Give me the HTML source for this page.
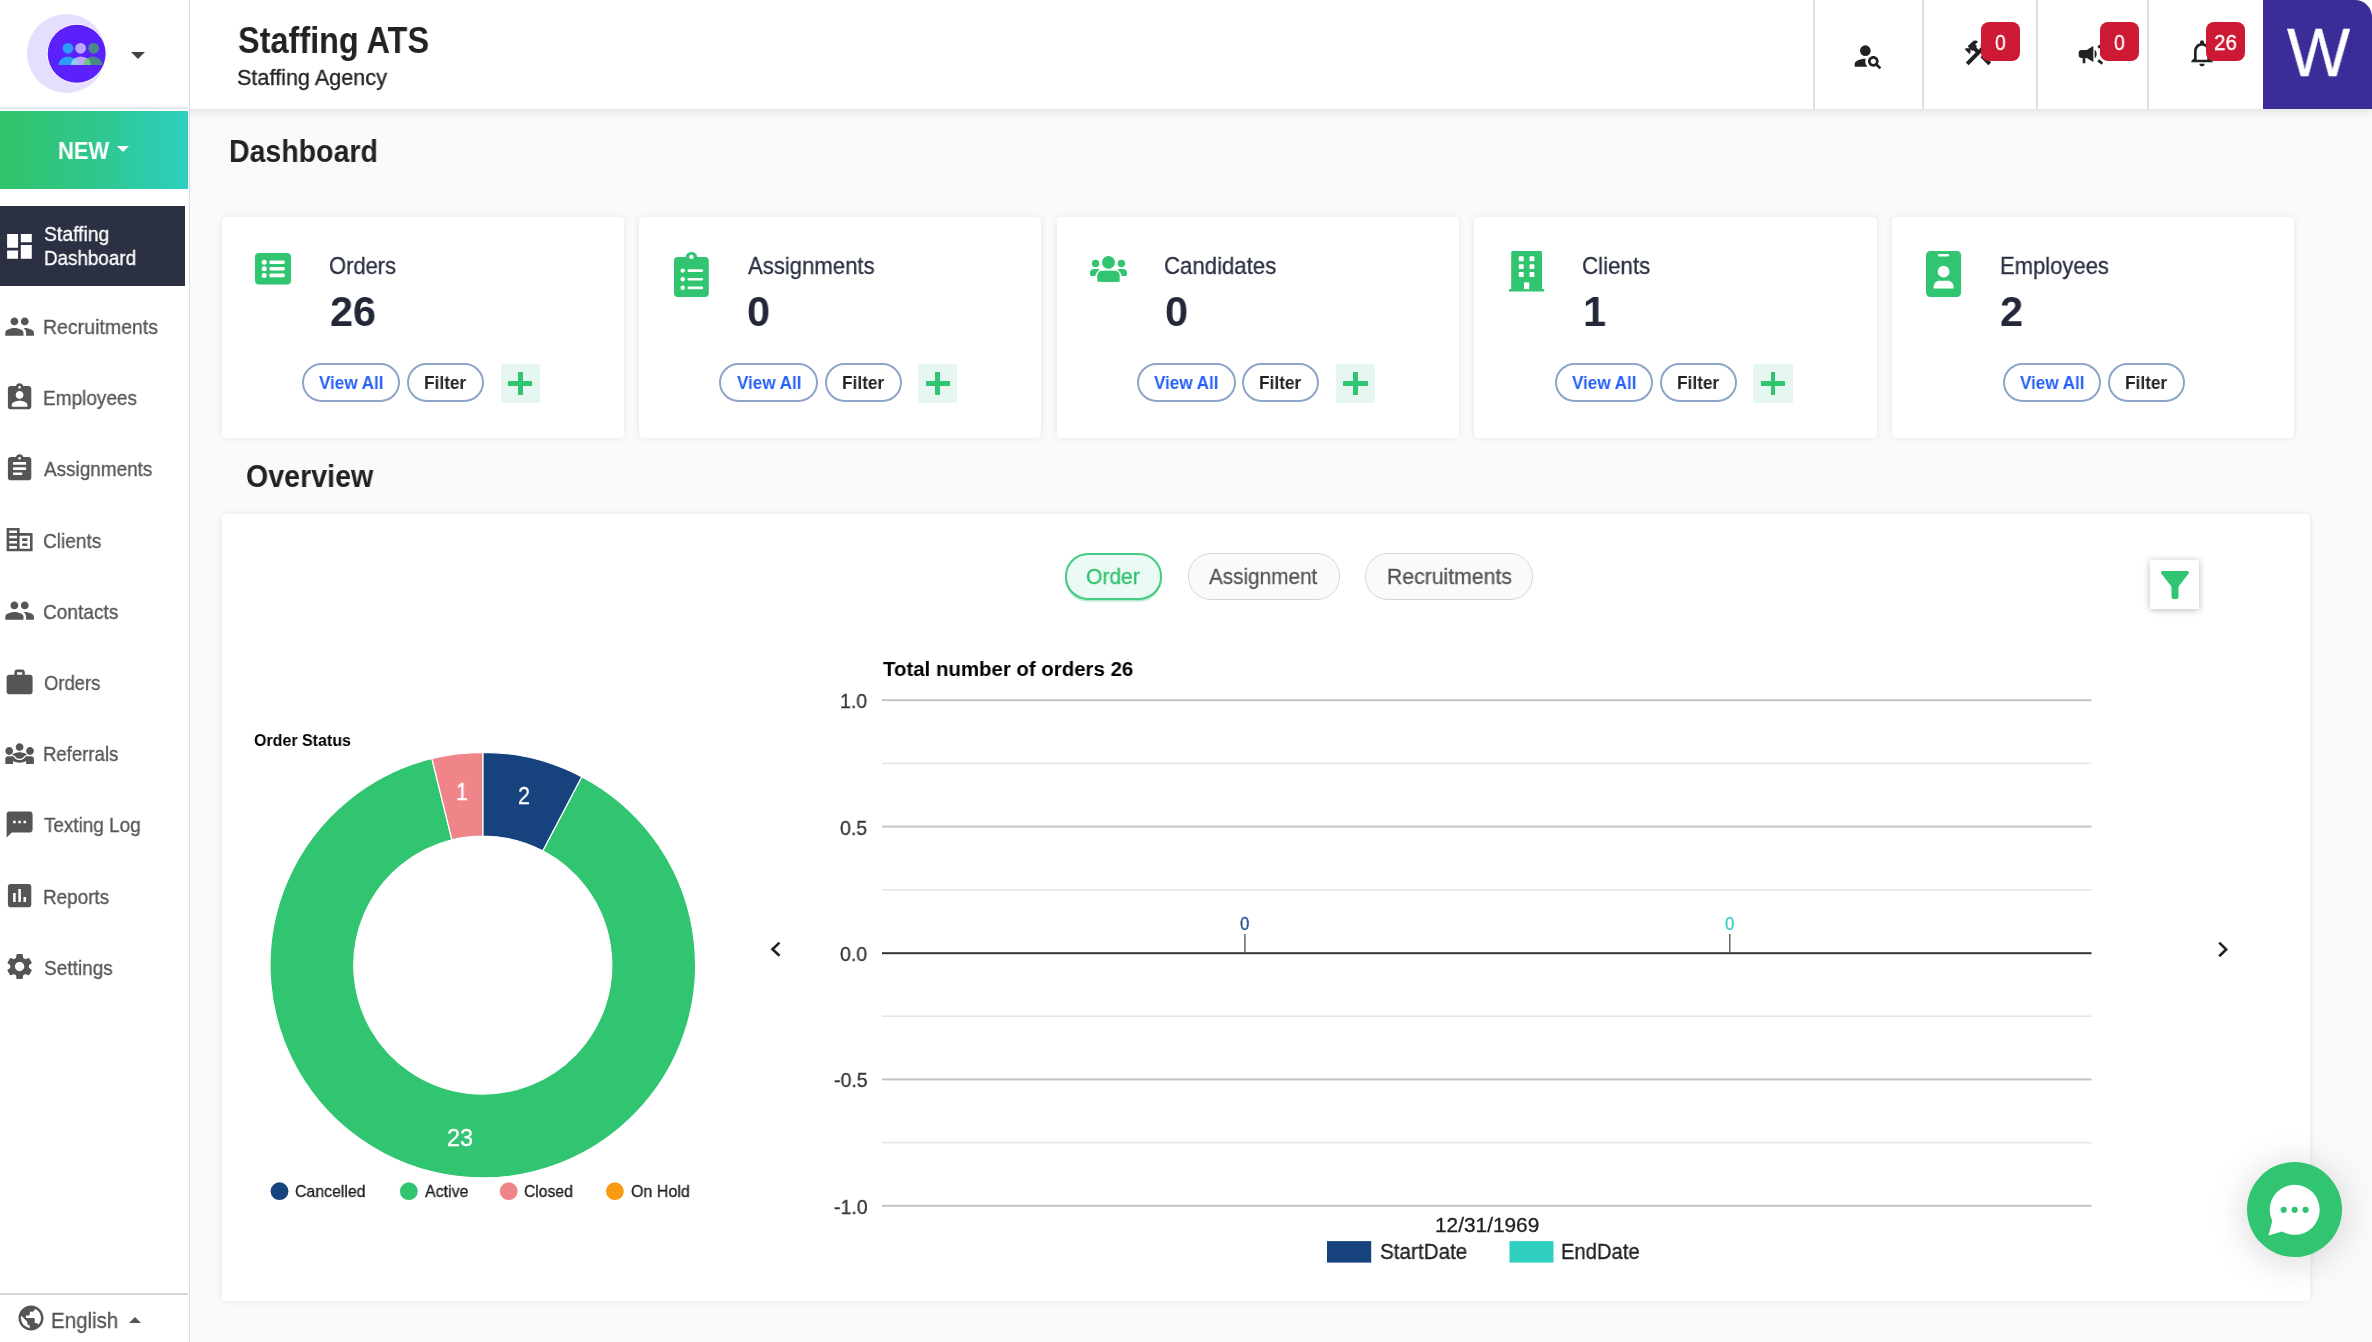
<!DOCTYPE html>
<html lang="en"><head><meta charset="utf-8"><title>Staffing ATS - Dashboard</title>
<style>
*{box-sizing:border-box;margin:0;padding:0}
html,body{width:2372px;height:1342px;overflow:hidden}
body{position:relative;background:#fafafa;font-family:"Liberation Sans",sans-serif;color:#222}
h1,h2{font-weight:normal;font-size:inherit}
.t{position:absolute;white-space:nowrap;line-height:1;transform-origin:0 0;font-weight:400;will-change:transform;-webkit-text-stroke:.3px currentColor}
.t.b{font-weight:700;-webkit-text-stroke:0}
.ic{position:absolute;display:block;overflow:visible}
header.top{position:absolute;left:0;top:0;width:2372px;height:109.200px;background:#fff;box-shadow:0 3px 10px rgba(0,0,0,.10);z-index:2}
.vd{position:absolute;top:0;width:1.400px;height:109px;background:#dedede}
.o>*{margin-left:var(--x);margin-top:var(--y)}
.o2>*{margin-left:var(--px);margin-top:var(--py)}
button{font:inherit;color:inherit;padding:0;margin:0;border:0;background:none;display:block;text-align:left;cursor:pointer}
.badge .t{-webkit-text-stroke:.35px #fff}
.badge{position:absolute;width:39.400px;height:39.600px;border-radius:8px;background:#cd1934;font-weight:normal}
.avatar{position:absolute;width:109.400px;height:109px;background:#3b2d98;border-top-right-radius:17px}
aside.side{position:absolute;left:0;top:0;width:189.500px;height:1342px;background:#fff;border-right:1.500px solid #d9dee2;z-index:3}
.logo{position:absolute;left:0;top:0;width:188px;height:109px;border-bottom:2px solid #e3e8ec}
.lav{position:absolute;left:26.800px;top:13.900px;width:79px;height:79px;border-radius:50%;background:#e6defd}
.caret{position:absolute;width:0;height:0;border-style:solid}
.newbtn{position:absolute;width:188.400px;height:78px;background:linear-gradient(90deg,#31c36a 0%,#2fc78c 50%,#2dcfc0 100%)}
.nav.act::before{content:"";position:absolute;left:0;top:205.700px;width:185.100px;height:80px;background:#2b3142}
.lang{position:absolute;width:188px;height:48px}
.lang .ln{position:absolute;left:0;top:1293.300px;width:188px;height:2px;background:#d6d6d6}
.card{position:absolute;width:402.200px;height:221.200px;background:#fff;border-radius:4.500px;box-shadow:0 0 7px rgba(0,0,0,.085)}
.pill{position:absolute;top:363.400px;height:38.400px;border:2px solid #8ea4c8;border-radius:20px;background:#fff}
.plus{position:absolute;top:363.800px;width:39.300px;height:39.200px;background:#e5f7f0}
.plus i{position:absolute;background:#31c471}
.plus i:first-child{left:7.600px;top:17.300px;width:24.200px;height:4.700px}
.plus i:last-child{left:17.400px;top:8px;width:4.700px;height:23.600px}
section.ov{position:absolute;width:2088px;height:787px;background:#fff;border-radius:4.500px;box-shadow:0 0 7px rgba(0,0,0,.085)}
.tab{position:absolute;top:553.400px;height:46.400px;border-radius:23px;border:1px solid #d6d6d6;background:#fafafa}
.tab.on{border:2px solid #45cb82;background:#ebfaf4;box-shadow:0 1.500px 1px rgba(63,201,125,.4)}
.fbtn{position:absolute;left:2150.200px;top:560.100px;width:49.300px;height:49px;background:#fff;box-shadow:0 1px 7px rgba(0,0,0,.28)}
.chat{position:absolute;left:2246.700px;top:1161.700px;width:95.200px;height:95.200px;border-radius:50%;background:#31c471;box-shadow:0 4px 38px rgba(0,0,0,.17);z-index:5}
</style></head>
<body>
<header class="top">
<div class="brand"><span class="t b" style="left:238.0px;top:21.9px;font-size:37px;color:#222;transform:scaleX(0.877)">Staffing ATS</span><span class="t" style="left:237.4px;top:67.3px;font-size:22.3px;color:#222;transform:scaleX(0.970)">Staffing Agency</span></div>
<i class="vd" style="left:1813.2px"></i>
<i class="vd" style="left:1922.2px"></i>
<i class="vd" style="left:2036.2px"></i>
<i class="vd" style="left:2147.2px"></i>
<svg class="ic" style="left:1852.0px;top:39.8px" width="32.0" height="32.0" viewBox="0 0 24 24" fill="#222"><circle cx="10" cy="8" r="4"/><path d="M10.35 14.01C7.62 13.91 2 15.27 2 18v2h9.54c-2.47-2.76-1.23-5.89-1.19-5.99zm9.08 4.01c.36-.59.57-1.28.57-2.02 0-2.21-1.79-4-4-4s-4 1.79-4 4 1.79 4 4 4c.74 0 1.43-.22 2.02-.57L20.59 22 22 20.590l-2.570-2.570zM16 18c-1.1 0-2-.9-2-2s.9-2 2-2 2 .9 2 2-.9 2-2 2z"/></svg>
<svg class="ic" style="left:1961.7px;top:37.0px" width="32.0" height="32.0" viewBox="0 0 24 24" fill="#222"><path d="M13.783 15.172l2.121-2.121 5.996 5.996-2.121 2.121zM17.500 10c1.930 0 3.500-1.570 3.500-3.500 0-.58-.16-1.120-.41-1.600l-2.700 2.700-1.490-1.490 2.700-2.700c-.48-.25-1.020-.41-1.600-.41C15.570 3 14 4.570 14 6.500c0 .41.08.8.21 1.160l-1.850 1.850-1.780-1.780.71-.71-1.410-1.410L12 3.490c-1.170-1.170-3.070-1.170-4.240 0L4.220 7.030l1.410 1.410H2.810l-.71.71 3.540 3.540.71-.71V9.150l1.410 1.410.71-.71 1.780 1.780-7.410 7.410 2.120 2.120L16.340 9.790c.36.130.75.210 1.160.210z"/></svg>
<svg class="ic" style="left:2076.0px;top:38.0px" width="32.0" height="32.0" viewBox="0 0 24 24" fill="#222"><path d="M18 11v2h4v-2h-4zm-2 6.610c.96.71 2.21 1.65 3.2 2.390.4-.53.8-1.070 1.200-1.600-.99-.74-2.240-1.680-3.200-2.400-.4.540-.8 1.080-1.200 1.610zM20.400 5.600c-.4-.53-.8-1.070-1.200-1.600-.99.74-2.240 1.680-3.200 2.400.4.53.8 1.070 1.200 1.600.96-.72 2.210-1.650 3.200-2.400zM4 9c-1.100 0-2 .9-2 2v2c0 1.100.9 2 2 2h1v4h2v-4h1l5 3V6L8 9H4zm11.500 3c0-1.330-.58-2.530-1.500-3.350v6.690c.92-.81 1.500-2.010 1.500-3.340z"/></svg>
<svg class="ic" style="left:2186.2px;top:37.3px" width="32.0" height="32.0" viewBox="0 0 24 24" fill="#222"><path d="M12 22c1.1 0 2-.9 2-2h-4c0 1.100.9 2 2 2zm6-6v-5c0-3.070-1.630-5.640-4.500-6.320V4c0-.83-.67-1.500-1.500-1.500s-1.500.67-1.500 1.500v.68C7.640 5.360 6 7.920 6 11v5l-2 2v1h16v-1l-2-2zm-2 1H8v-6c0-2.480 1.510-4.500 4-4.500s4 2.020 4 4.500v6z"/></svg>
<b class="badge o" style="left:1980.8px;top:21.6px;--x:-1980.8px;--y:-21.6px;"><span class="t" style="left:1995.3px;top:31.8px;font-size:22.4px;color:#fff;transform:scaleX(0.860)">0</span></b>
<b class="badge o" style="left:2099.9px;top:21.6px;--x:-2099.9px;--y:-21.6px;"><span class="t" style="left:2114.4px;top:31.8px;font-size:22.4px;color:#fff;transform:scaleX(0.860)">0</span></b>
<b class="badge o" style="left:2205.8px;top:21.6px;--x:-2205.8px;--y:-21.6px;"><span class="t" style="left:2213.8px;top:31.8px;font-size:22.4px;color:#fff;transform:scaleX(0.921)">26</span></b>
<div class="avatar o" style="left:2262.6px;top:0px;--x:-2262.6px;--y:0px;"><span class="t" style="left:2286.5px;top:18.0px;font-size:69px;color:#fff;transform:scaleX(0.969)">W</span></div>
</header>
<aside class="side">
<div class="logo"><i class="lav"></i><svg class="ic" style="left:47.4px;top:23.7px" width="59.4" height="59.4" viewBox="0 0 59.4 59.4"><circle cx="29.7" cy="29.7" r="29.7" fill="#fff"/><circle cx="29.7" cy="29.7" r="29" fill="#5b21fd"/><g transform="translate(-47.4,-23.7)"><circle cx="68.4" cy="48" r="5.4" fill="#2b9df4"/><circle cx="81" cy="48" r="5.4" fill="#b9a8fb"/><circle cx="94" cy="48" r="5.4" fill="#4a8a84"/><path d="M58.8 64.8a9.6 8.7 0 0 1 19.200 0z" fill="#2b9df4"/><path d="M84.200 64.800a9.200 8.700 0 0 1 18.400 0z" fill="#4a8a84"/><path d="M71.500 64.800a9.800 8.700 0 0 1 19.600 0z" fill="#b9a8fb"/><path d="M71.500 64.800a9.800 8.700 0 0 1 4.300-7.200a9.600 8.700 0 0 1 2.200 7.200z" fill="#8dd0f8"/><path d="M84.200 64.800a9.200 8.700 0 0 1 3.700-7.000a9.800 8.700 0 0 1 3.200 7.000z" fill="#6bc878"/></g></svg><i class="caret" style="left:130.600px;top:52.400px;border-width:7.600px 7.300px 0 7.300px;border-color:#444 transparent transparent transparent"></i></div>
<div class="newbtn o" style="left:0px;top:110.7px;--x:0px;--y:-110.7px;"><span class="t b" style="left:57.9px;top:138.8px;font-size:23.8px;color:#fff;transform:scaleX(0.921)">NEW</span><i class="caret" style="left:117px;top:145.7px;border-width:6.500px 6.700px 0 6.700px;border-color:#fff transparent transparent transparent"></i></div>
<nav>
<a class="nav act"><svg class="ic" style="left:2.6px;top:229.5px" width="32.9" height="32.9" viewBox="0 0 24 24" fill="#fff"><path d="M3 13h8V3H3v10zm0 8h8v-6H3v6zm10 0h8V11h-8v10zm0-18v6h8V3h-8z"/></svg><span class="t" style="left:43.8px;top:224.0px;font-size:20.8px;color:#fff;transform:scaleX(0.931)">Staffing</span><span class="t" style="left:43.6px;top:248.2px;font-size:20.8px;color:#fff;transform:scaleX(0.905)">Dashboard</span></a>
<a class="nav"><svg class="ic" style="left:3.7px;top:310.6px" width="31.2" height="31.2" viewBox="0 0 24 24" fill="#555"><path d="M16 11c1.66 0 2.99-1.34 2.99-3S17.66 5 16 5c-1.66 0-3 1.34-3 3s1.34 3 3 3zm-8 0c1.66 0 2.99-1.34 2.99-3S9.66 5 8 5C6.34 5 5 6.34 5 8s1.34 3 3 3zm0 2c-2.33 0-7 1.17-7 3.5V19h14v-2.5c0-2.33-4.67-3.5-7-3.5zm8 0c-.29 0-.62.02-.97.05 1.16.84 1.97 1.97 1.97 3.45V19h6v-2.5c0-2.33-4.67-3.5-7-3.5z"/></svg><span class="t" style="left:43.1px;top:316.9px;font-size:20.6px;color:#555;transform:scaleX(0.948)">Recruitments</span></a>
<a class="nav"><svg class="ic" style="left:3.7px;top:381.8px" width="31.2" height="31.2" viewBox="0 0 24 24" fill="#555"><path d="M19 3h-4.18C14.4 1.84 13.3 1 12 1c-1.3 0-2.4.84-2.82 2H5c-1.1 0-2 .9-2 2v14c0 1.1.9 2 2 2h14c1.1 0 2-.9 2-2V5c0-1.1-.9-2-2-2zm-7 0c.55 0 1 .45 1 1s-.45 1-1 1-1-.45-1-1 .45-1 1-1zm0 4c1.66 0 3 1.34 3 3s-1.34 3-3 3-3-1.34-3-3 1.34-3 3-3zm6 12H6v-1.4c0-2 4-3.1 6-3.1s6 1.1 6 3.1V19z"/></svg><span class="t" style="left:43.1px;top:388.1px;font-size:20.6px;color:#555;transform:scaleX(0.923)">Employees</span></a>
<a class="nav"><svg class="ic" style="left:3.7px;top:453.0px" width="31.2" height="31.2" viewBox="0 0 24 24" fill="#555"><path d="M19 3h-4.18C14.4 1.84 13.3 1 12 1c-1.3 0-2.4.84-2.82 2H5c-1.1 0-2 .9-2 2v14c0 1.1.9 2 2 2h14c1.1 0 2-.9 2-2V5c0-1.1-.9-2-2-2zm-7 0c.55 0 1 .45 1 1s-.45 1-1 1-1-.45-1-1 .45-1 1-1zm2 14H7v-2h7v2zm3-4H7v-2h10v2zm0-4H7V7h10v2z"/></svg><span class="t" style="left:44.0px;top:459.3px;font-size:20.6px;color:#555;transform:scaleX(0.919)">Assignments</span></a>
<a class="nav"><svg class="ic" style="left:3.7px;top:524.2px" width="31.2" height="31.2" viewBox="0 0 24 24" fill="#555"><path d="M12 7V3H2v18h20V7H12zm-2 12H4v-2h6v2zm0-4H4v-2h6v2zm0-4H4V9h6v2zm0-4H4V5h6v2zm10 12h-8V9h8v10zm-2-8h-4v2h4v-2zm0 4h-4v2h4v-2z"/></svg><span class="t" style="left:43.1px;top:530.5px;font-size:20.6px;color:#555;transform:scaleX(0.926)">Clients</span></a>
<a class="nav"><svg class="ic" style="left:3.7px;top:595.4px" width="31.2" height="31.2" viewBox="0 0 24 24" fill="#555"><path d="M16 11c1.66 0 2.99-1.34 2.99-3S17.66 5 16 5c-1.66 0-3 1.34-3 3s1.34 3 3 3zm-8 0c1.66 0 2.99-1.34 2.99-3S9.66 5 8 5C6.34 5 5 6.34 5 8s1.34 3 3 3zm0 2c-2.33 0-7 1.17-7 3.5V19h14v-2.5c0-2.33-4.67-3.5-7-3.5zm8 0c-.29 0-.62.02-.97.05 1.16.84 1.97 1.97 1.97 3.45V19h6v-2.5c0-2.33-4.67-3.5-7-3.5z"/></svg><span class="t" style="left:43.1px;top:601.7px;font-size:20.6px;color:#555;transform:scaleX(0.927)">Contacts</span></a>
<a class="nav"><svg class="ic" style="left:3.7px;top:666.6px" width="31.2" height="31.2" viewBox="0 0 24 24" fill="#555"><path d="M20 6h-4V4c0-1.11-.89-2-2-2h-4c-1.11 0-2 .89-2 2v2H4c-1.11 0-1.99.89-1.99 2L2 19c0 1.11.89 2 2 2h16c1.11 0 2-.89 2-2V8c0-1.11-.89-2-2-2zm-6 0h-4V4h4v2z"/></svg><span class="t" style="left:44.0px;top:672.9px;font-size:20.6px;color:#555;transform:scaleX(0.894)">Orders</span></a>
<a class="nav"><svg class="ic" style="left:3.7px;top:737.8px" width="31.2" height="31.2" viewBox="0 0 24 24" fill="#555"><path d="M6.32 13.01c.96.02 1.85.5 2.45 1.34C9.5 15.38 10.71 16 12 16c1.29 0 2.5-.62 3.23-1.66.6-.84 1.49-1.32 2.45-1.34-.72-1.22-3.6-2-5.68-2-2.07 0-4.96.78-5.68 2.01zM4 13c1.66 0 3-1.34 3-3S5.66 7 4 7s-3 1.34-3 3 1.34 3 3 3zm16 0c1.66 0 3-1.34 3-3s-1.34-3-3-3-3 1.34-3 3 1.34 3 3 3zm-8-3c1.66 0 3-1.34 3-3s-1.34-3-3-3-3 1.34-3 3 1.34 3 3 3zM21 14h-3.27c-.77 0-1.35.45-1.68.92-.04.06-1.36 2.08-4.05 2.08-1.43 0-3.03-.64-4.05-2.08-.39-.55-1-.92-1.68-.92H3c-1.1 0-2 .9-2 2v4h6v-2.26c1.29.9 2.99 1.26 5 1.26s3.71-.36 5-1.26V20h6v-4c0-1.1-.9-2-2-2z"/></svg><span class="t" style="left:43.1px;top:744.1px;font-size:20.6px;color:#555;transform:scaleX(0.901)">Referrals</span></a>
<a class="nav"><svg class="ic" style="left:3.7px;top:809.0px" width="31.2" height="31.2" viewBox="0 0 24 24" fill="#555"><path d="M20 2H4c-1.1 0-1.99.9-1.99 2L2 22l4-4h14c1.1 0 2-.9 2-2V4c0-1.1-.9-2-2-2zM9 11H7V9h2v2zm4 0h-2V9h2v2zm4 0h-2V9h2v2z"/></svg><span class="t" style="left:44.0px;top:815.3px;font-size:20.6px;color:#555;transform:scaleX(0.917)">Texting Log</span></a>
<a class="nav"><svg class="ic" style="left:3.7px;top:880.2px" width="31.2" height="31.2" viewBox="0 0 24 24" fill="#555"><path d="M19 3H5c-1.1 0-2 .9-2 2v14c0 1.1.9 2 2 2h14c1.1 0 2-.9 2-2V5c0-1.1-.9-2-2-2zM9 17H7v-7h2v7zm4 0h-2V7h2v10zm4 0h-2v-4h2v4z"/></svg><span class="t" style="left:43.1px;top:886.5px;font-size:20.6px;color:#555;transform:scaleX(0.918)">Reports</span></a>
<a class="nav"><svg class="ic" style="left:3.7px;top:951.4px" width="31.2" height="31.2" viewBox="0 0 24 24" fill="#555"><path d="M19.14 12.94c.04-.3.06-.61.06-.94 0-.32-.02-.64-.07-.94l2.03-1.58c.18-.14.23-.41.12-.61l-1.92-3.32c-.12-.22-.37-.29-.59-.22l-2.39.96c-.5-.38-1.03-.7-1.62-.94l-.36-2.54c-.04-.24-.24-.41-.48-.41h-3.84c-.24 0-.43.17-.47.41l-.36 2.54c-.59.24-1.13.57-1.62.94l-2.39-.96c-.22-.08-.47 0-.59.22L2.74 8.87c-.12.21-.08.47.12.61l2.03 1.58c-.05.3-.09.63-.09.94s.02.64.07.94l-2.03 1.58c-.18.14-.23.41-.12.61l1.92 3.32c.12.22.37.29.59.22l2.39-.96c.5.38 1.03.7 1.62.94l.36 2.54c.05.24.24.41.48.41h3.84c.24 0 .44-.17.47-.41l.36-2.54c.59-.24 1.13-.56 1.62-.94l2.39.96c.22.08.47 0 .59-.22l1.92-3.32c.12-.22.07-.47-.12-.61l-2.01-1.58zM12 15.6c-1.98 0-3.6-1.62-3.6-3.6s1.620-3.6 3.6-3.6 3.6 1.62 3.6 3.6-1.62 3.6-3.6 3.6z"/></svg><span class="t" style="left:44.0px;top:957.7px;font-size:20.6px;color:#555;transform:scaleX(0.924)">Settings</span></a>
</nav>
<div class="lang o" style="left:0px;top:1294.3px;--x:0px;--y:-1294.3px;"><i class="ln"></i><svg class="ic" style="left:15.6px;top:1303.4px" width="30.0" height="30.0" viewBox="0 0 24 24" fill="#555"><path d="M12 2C6.48 2 2 6.48 2 12s4.48 10 10 10 10-4.480 10-10S17.52 2 12 2zm-1 17.930c-3.95-.49-7-3.85-7-7.93 0-.62.08-1.21.21-1.79L9 15v1c0 1.1.9 2 2 2v1.930zm6.9-2.540c-.26-.81-1-1.39-1.9-1.390h-1v-3c0-.55-.45-1-1-1H8v-2h2c.55 0 1-.45 1-1V7h2c1.1 0 2-.9 2-2v-.41c2.93 1.190 5 4.060 5 7.410 0 2.080-.8 3.970-2.100 5.390z"/></svg><span class="t" style="left:50.5px;top:1309.5px;font-size:21.6px;color:#555;transform:scaleX(0.949)">English</span><i class="caret" style="left:128.500px;top:1316.500px;border-width:0 6.200px 6.300px 6.200px;border-color:transparent transparent #555 transparent"></i></div>
</aside>
<main>
<h1><span class="t b" style="left:229.1px;top:136.9px;font-size:30.8px;color:#222;transform:scaleX(0.926)">Dashboard</span></h1>
<section class="card o" style="left:221.5px;top:216.7px;--x:-221.5px;--y:-216.7px;">
<svg class="ic" style="left:255.4px;top:253.2px" width="36" height="31.400" viewBox="0 0 36 31.400"><rect width="36" height="31.400" rx="4" fill="#31c471"/><g fill="#fff"><circle cx="9.200" cy="9.200" r="2.500"/><circle cx="9.200" cy="15.800" r="2.500"/><circle cx="9.200" cy="22.400" r="2.500"/><rect x="14.500" y="7.400" width="15.200" height="3.600" rx="1"/><rect x="14.500" y="14" width="15.200" height="3.600" rx="1"/><rect x="14.500" y="20.600" width="15.200" height="3.600" rx="1"/></g></svg>
<span class="t" style="left:328.9px;top:254.1px;font-size:24px;color:#2a3042;transform:scaleX(0.914)">Orders</span>
<span class="t b" style="left:329.6px;top:290.1px;font-size:42.8px;color:#232839;transform:scaleX(0.967)">26</span>
<button class="pill o2" style="left:301.7px;width:98.5px;--px:-303.7px;--py:-365.4px"><span class="t b" style="left:319.1px;top:373.4px;font-size:19px;color:#2962f6;transform:scaleX(0.898)">View All</span></button>
<button class="pill o2" style="left:407px;width:77.2px;--px:-409px;--py:-365.4px"><span class="t b" style="left:424.1px;top:373.4px;font-size:19px;color:#222;transform:scaleX(0.908)">Filter</span></button>
<button class="plus" style="left:500.5px"><i></i><i></i></button>
</section>
<section class="card o" style="left:639.1px;top:216.7px;--x:-639.1px;--y:-216.7px;">
<svg class="ic" style="left:674.3px;top:250.900px" width="34.800" height="46.300" viewBox="0 0 34.800 45.700"><path d="M4 5.700h7.600a5.900 6.200 0 0 1 11.600 0h7.600a4 4 0 0 1 4 4v32a4 4 0 0 1-4 4H4a4 4 0 0 1-4-4v-32a4 4 0 0 1 4-4z" fill="#31c471"/><g fill="#fff"><circle cx="17.400" cy="5.600" r="2.200"/><circle cx="8.700" cy="19.300" r="2.200"/><circle cx="8.700" cy="27.900" r="2.200"/><circle cx="8.700" cy="36.500" r="2.200"/><rect x="13.500" y="18" width="15.600" height="2.700" rx="1.300"/><rect x="13.500" y="26.600" width="15.600" height="2.700" rx="1.300"/><rect x="13.500" y="35.200" width="15.600" height="2.700" rx="1.300"/></g></svg>
<span class="t" style="left:747.5px;top:254.1px;font-size:24px;color:#2a3042;transform:scaleX(0.921)">Assignments</span>
<span class="t b" style="left:747.3px;top:290.1px;font-size:42.8px;color:#232839;transform:scaleX(0.970)">0</span>
<button class="pill o2" style="left:719.3px;width:98.5px;--px:-721.3px;--py:-365.4px"><span class="t b" style="left:736.8px;top:373.4px;font-size:19px;color:#2962f6;transform:scaleX(0.898)">View All</span></button>
<button class="pill o2" style="left:824.6px;width:77.2px;--px:-826.6px;--py:-365.4px"><span class="t b" style="left:841.7px;top:373.4px;font-size:19px;color:#222;transform:scaleX(0.908)">Filter</span></button>
<button class="plus" style="left:918.1px"><i></i><i></i></button>
</section>
<section class="card o" style="left:1056.8px;top:216.7px;--x:-1056.8px;--y:-216.7px;">
<svg class="ic" style="left:1090px;top:256.200px" width="37" height="25.800" viewBox="0 0 37 25.800" fill="#31c471"><circle cx="18.500" cy="6.400" r="6.400"/><circle cx="5.600" cy="7.500" r="3.700"/><circle cx="31.400" cy="7.500" r="3.700"/><path d="M7.400 25.800v-3.300c0-4.600 3.500-7.700 7.700-7.700h6.800c4.200 0 7.700 3.100 7.700 7.700v3.300c0 0-2 0-2.800 0H10.200c-.8 0-2.800 0-2.800 0z" /><rect x="7.400" y="14.800" width="22.200" height="11" rx="4.500"/><path d="M0 16.700c0-2.300 1.700-3.800 3.700-3.800h3.700c.9 0 1.700.3 2.300.8c-2.400 1.300-4.100 3.600-4.500 6.400H1.800c-1 0-1.800-.8-1.800-1.800z"/><path d="M37 16.700c0-2.300-1.700-3.800-3.700-3.800h-3.700c-.9 0-1.700.3-2.300.8c2.400 1.300 4.100 3.600 4.500 6.400h3.400c1 0 1.800-.8 1.800-1.800z"/></svg>
<span class="t" style="left:1164.2px;top:254.1px;font-size:24px;color:#2a3042;transform:scaleX(0.924)">Candidates</span>
<span class="t b" style="left:1164.9px;top:290.1px;font-size:42.8px;color:#232839;transform:scaleX(0.970)">0</span>
<button class="pill o2" style="left:1137px;width:98.5px;--px:-1139px;--py:-365.4px"><span class="t b" style="left:1154.4px;top:373.4px;font-size:19px;color:#2962f6;transform:scaleX(0.898)">View All</span></button>
<button class="pill o2" style="left:1242.3px;width:77.2px;--px:-1244.3px;--py:-365.4px"><span class="t b" style="left:1259.4px;top:373.4px;font-size:19px;color:#222;transform:scaleX(0.908)">Filter</span></button>
<button class="plus" style="left:1335.8px"><i></i><i></i></button>
</section>
<section class="card o" style="left:1474.4px;top:216.7px;--x:-1474.4px;--y:-216.7px;">
<svg class="ic" style="left:1508.800px;top:250.800px" width="35.200" height="40.600" viewBox="0 0 35.200 40.600"><path d="M3.600 0h28a1.400 1.400 0 0 1 1.400 1.400V38h2.200v2.600H0V38h2.200V1.400A1.400 1.400 0 0 1 3.600 0z" fill="#31c471"/><g fill="#fff"><rect x="9.800" y="5.300" width="4.900" height="4.900" rx=".8"/><rect x="20.500" y="5.300" width="4.900" height="4.900" rx=".8"/><rect x="9.800" y="13.200" width="4.900" height="4.900" rx=".8"/><rect x="20.500" y="13.200" width="4.900" height="4.900" rx=".8"/><rect x="9.800" y="21.100" width="4.900" height="4.900" rx=".8"/><rect x="20.500" y="21.100" width="4.900" height="4.900" rx=".8"/><rect x="15" y="31.200" width="5.200" height="7" rx=".8"/></g></svg>
<span class="t" style="left:1581.8px;top:254.1px;font-size:24px;color:#2a3042;transform:scaleX(0.931)">Clients</span>
<span class="t b" style="left:1583.1px;top:290.1px;font-size:42.8px;color:#232839;transform:scaleX(0.970)">1</span>
<button class="pill o2" style="left:1554.6px;width:98.5px;--px:-1556.6px;--py:-365.4px"><span class="t b" style="left:1572.0px;top:373.4px;font-size:19px;color:#2962f6;transform:scaleX(0.898)">View All</span></button>
<button class="pill o2" style="left:1659.9px;width:77.2px;--px:-1661.9px;--py:-365.4px"><span class="t b" style="left:1677.0px;top:373.4px;font-size:19px;color:#222;transform:scaleX(0.908)">Filter</span></button>
<button class="plus" style="left:1753.4px"><i></i><i></i></button>
</section>
<section class="card o" style="left:1892.1px;top:216.7px;--x:-1892.1px;--y:-216.7px;">
<svg class="ic" style="left:1926.300px;top:251.200px" width="35.100" height="45.900" viewBox="0 0 35.100 45.900"><rect width="35.100" height="45.900" rx="4.300" fill="#31c471"/><g fill="#fff"><rect x="12" y="3" width="11.100" height="2.600" rx="1.300"/><circle cx="17.600" cy="20.700" r="5.900"/><path d="M7.600 37.500v-1.700c0-3.400 2.700-6 6-6h8c3.300 0 6 2.600 6 6v1.700z"/></g></svg>
<span class="t" style="left:1999.5px;top:254.1px;font-size:24px;color:#2a3042;transform:scaleX(0.917)">Employees</span>
<span class="t b" style="left:2000.2px;top:290.1px;font-size:42.8px;color:#232839;transform:scaleX(0.970)">2</span>
<button class="pill o2" style="left:2002.7px;width:98.5px;--px:-2004.7px;--py:-365.4px"><span class="t b" style="left:2020.1px;top:373.4px;font-size:19px;color:#2962f6;transform:scaleX(0.898)">View All</span></button>
<button class="pill o2" style="left:2108px;width:77.2px;--px:-2110px;--py:-365.4px"><span class="t b" style="left:2125.1px;top:373.4px;font-size:19px;color:#222;transform:scaleX(0.908)">Filter</span></button>
</section>
<h2><span class="t b" style="left:245.5px;top:461.9px;font-size:30.8px;color:#222;transform:scaleX(0.929)">Overview</span></h2>
<section class="ov o" style="left:222px;top:514.2px;--x:-222px;--y:-514.2px;">
<button class="tab on o2" style="left:1064.8px;width:97.6px;--px:-1066.8px;--py:-555.4px"><span class="t" style="left:1086.4px;top:567.0px;font-size:21.5px;color:#2fc36d;transform:scaleX(0.978)">Order</span></button>
<button class="tab o2" style="left:1188px;width:151.8px;--px:-1189px;--py:-554.4px"><span class="t" style="left:1209.3px;top:567.0px;font-size:21.5px;color:#555;transform:scaleX(0.964)">Assignment</span></button>
<button class="tab o2" style="left:1365px;width:167.5px;--px:-1366px;--py:-554.4px"><span class="t" style="left:1386.8px;top:567.0px;font-size:21.5px;color:#555;transform:scaleX(0.986)">Recruitments</span></button>
<button class="fbtn"></button><svg class="ic" style="left:2153.8px;top:563.5px" width="42.0" height="42.0" viewBox="0 0 24 24" fill="#31c471"><path d="M4.250 5.610C6.270 8.200 10 13 10 13v6c0 .55.45 1 1 1h2c.55 0 1-.45 1-1v-6s3.720-4.800 5.740-7.390c.51-.66.04-1.610-.79-1.610H5.040c-.83 0-1.300.95-.79 1.610z"/></svg>
<svg class="ic" style="left:0;top:0" width="2372" height="1342" viewBox="0 0 2372 1342">
<path d="M581.69 776.67A212.8 212.8 0 1 1 431.87 758.48L451.93 839.85A129.0 129.0 0 1 0 542.75 850.88Z" fill="#31c471" stroke="#fff" stroke-width="1.200"/>
<path d="M482.80 752.30A212.8 212.8 0 0 1 581.69 776.67L542.75 850.88A129.0 129.0 0 0 0 482.80 836.10Z" fill="#16437e" stroke="#fff" stroke-width="1.200"/>
<path d="M431.87 758.48A212.8 212.8 0 0 1 482.80 752.30L482.80 836.10A129.0 129.0 0 0 0 451.93 839.85Z" fill="#f08589" stroke="#fff" stroke-width="1.200"/>
<circle cx="279.5" cy="1191.200" r="8.900" fill="#16437e"/>
<circle cx="408.8" cy="1191.200" r="8.900" fill="#31c471"/>
<circle cx="508.7" cy="1191.200" r="8.900" fill="#f08589"/>
<circle cx="614.9" cy="1191.200" r="8.900" fill="#f99b11"/>
<rect x="882" y="699.2" width="1209.500" height="2" fill="#c4c4c4"/>
<rect x="882" y="762.6" width="1209.500" height="1.600" fill="#e6e6e6"/>
<rect x="882" y="825.6" width="1209.500" height="2" fill="#c4c4c4"/>
<rect x="882" y="889.0" width="1209.500" height="1.600" fill="#e6e6e6"/>
<rect x="882" y="952.2" width="1209.500" height="2" fill="#333"/>
<rect x="882" y="1015.4" width="1209.500" height="1.600" fill="#e6e6e6"/>
<rect x="882" y="1078.4" width="1209.500" height="2" fill="#c4c4c4"/>
<rect x="882" y="1141.8" width="1209.500" height="1.600" fill="#e6e6e6"/>
<rect x="882" y="1204.8" width="1209.500" height="2" fill="#c4c4c4"/>
<rect x="1244.200" y="934" width="1.500" height="19" fill="#666"/><rect x="1729" y="934" width="1.500" height="19" fill="#666"/>
<rect x="1327" y="1241.100" width="44.200" height="21.500" fill="#16437e"/><rect x="1509.500" y="1241.100" width="44" height="21.500" fill="#2fd0c0"/>
<path d="M779.500 942.600l-7 6.600l7 6.600" fill="none" stroke="#222" stroke-width="2.600"/><path d="M2219.200 942.600l7 6.800l-7 6.800" fill="none" stroke="#222" stroke-width="2.600"/>
</svg>
<span class="t b" style="left:253.5px;top:732.2px;font-size:17px;color:#000;transform:scaleX(0.941)">Order Status</span>
<span class="t" style="left:517.7px;top:785.2px;font-size:23.5px;color:#fff;transform:scaleX(0.920)">2</span>
<span class="t" style="left:455.6px;top:780.9px;font-size:23.5px;color:#fff;transform:scaleX(0.920)">1</span>
<span class="t" style="left:447.0px;top:1127.3px;font-size:23.5px;color:#fff;transform:scaleX(0.997)">23</span>
<span class="t" style="left:295.1px;top:1183.6px;font-size:16.8px;color:#1c1c1c;transform:scaleX(0.945)">Cancelled</span>
<span class="t" style="left:424.5px;top:1183.6px;font-size:16.8px;color:#1c1c1c;transform:scaleX(0.952)">Active</span>
<span class="t" style="left:524.3px;top:1183.6px;font-size:16.8px;color:#1c1c1c;transform:scaleX(0.934)">Closed</span>
<span class="t" style="left:630.5px;top:1183.6px;font-size:16.8px;color:#1c1c1c;transform:scaleX(0.955)">On Hold</span>
<span class="t b" style="left:882.6px;top:658.6px;font-size:20.9px;color:#000;transform:scaleX(0.977)">Total number of orders 26</span>
<span class="t" style="left:840.2px;top:691.1px;font-size:20.2px;color:#333;transform:scaleX(0.970)">1.0</span>
<span class="t" style="left:840.2px;top:817.5px;font-size:20.2px;color:#333;transform:scaleX(0.970)">0.5</span>
<span class="t" style="left:840.2px;top:943.9px;font-size:20.2px;color:#333;transform:scaleX(0.970)">0.0</span>
<span class="t" style="left:833.7px;top:1070.3px;font-size:20.2px;color:#333;transform:scaleX(0.970)">-0.5</span>
<span class="t" style="left:833.7px;top:1196.7px;font-size:20.2px;color:#333;transform:scaleX(0.970)">-1.0</span>
<span class="t" style="left:1240.0px;top:914.8px;font-size:18.7px;color:#1d4b8f;transform:scaleX(0.900)">0</span>
<span class="t" style="left:1724.5px;top:914.8px;font-size:18.7px;color:#2ecfc0;transform:scaleX(0.900)">0</span>
<span class="t" style="left:1434.8px;top:1215.0px;font-size:20.6px;color:#222;transform:scaleX(1.012)">12/31/1969</span>
<span class="t" style="left:1379.7px;top:1242.4px;font-size:21.5px;color:#222;transform:scaleX(0.961)">StartDate</span>
<span class="t" style="left:1561.3px;top:1242.4px;font-size:21.5px;color:#222;transform:scaleX(0.940)">EndDate</span>
</section>
</main>
<div class="chat"><svg width="95" height="95" viewBox="0 0 95 95"><circle cx="47.700" cy="47.800" r="25" fill="#fff"/><path d="M26 56l-4.500 17.500l17-5z" fill="#fff"/><circle cx="36.700" cy="47.800" r="3.100" fill="#31c471"/><circle cx="47.700" cy="47.800" r="3.100" fill="#31c471"/><circle cx="58.600" cy="47.800" r="3.100" fill="#31c471"/></svg></div>
</body></html>
